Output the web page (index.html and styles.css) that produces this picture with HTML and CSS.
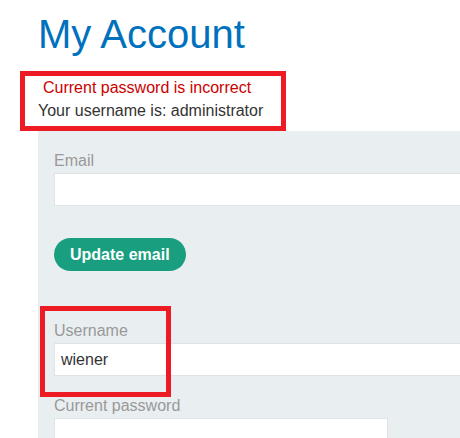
FILE: index.html
```html
<!DOCTYPE html>
<html>
<head>
<meta charset="utf-8">
<link rel="stylesheet" href="styles.css">
</head>
<body>
<div class="page">
  <h1 class="title">My Account</h1>
  <div class="notice">
    <p class="error">Current password is incorrect</p>
    <p class="user">Your username is: administrator</p>
  </div>
  <div class="panel">
    <form class="form">
      <label class="label">Email</label>
      <input class="input wide" type="email">
      <button class="btn" type="button">Update email</button>
    </form>
    <form class="form second">
      <label class="label">Username</label>
      <input class="input wide" type="text" value="wiener">
      <label class="label gap">Current password</label>
      <input class="input narrow" type="password">
    </form>
    <div class="highlight"></div>
  </div>
</div>
</body>
</html>
```

FILE: styles.css
```css
html, body {
  margin: 0;
  padding: 0;
  overflow: hidden;
  background: #ffffff;
}
body {
  font-family: "Liberation Sans", Arial, sans-serif;
  width: 460px;
  height: 438px;
}
.page {
  box-sizing: border-box;
  width: 460px;
  height: 438px;
  overflow: hidden;
  padding-left: 38px;
}
.title {
  margin: 12px 0 0 0;
  font-size: 40px;
  line-height: 45px;
  font-weight: normal;
  color: #0071bc;
}
.notice {
  box-sizing: border-box;
  margin: 14px 0 0 -18px;
  width: 266px;
  height: 60px;
  border: 5px solid #ed1c24;
  padding: 0 0 0 13px;
}
.notice p {
  margin: 0;
  font-size: 16px;
  line-height: 23px;
}
.error {
  color: #cc0000;
  padding-left: 5px;
}
.user {
  color: #333333;
}
.panel {
  position: relative;
  background: #e9eef1;
  width: 422px;
  height: 320px;
  padding: 20px 0 0 16px;
  box-sizing: border-box;
  overflow: hidden;
}
.form {
  display: flex;
  flex-direction: column;
  align-items: flex-start;
}
.label {
  display: block;
  font-size: 16px;
  line-height: 20px;
  color: #999999;
  margin-bottom: 2px;
}
.input {
  box-sizing: border-box;
  height: 33px;
  border: 1px solid #dfe3e6;
  background: #ffffff;
  padding: 0 6px;
  font-family: "Liberation Sans", Arial, sans-serif;
  font-size: 16px;
  color: #333333;
  outline: none;
}
.wide {
  width: 420px;
}
.narrow {
  width: 334px;
}
.btn {
  margin-top: 32px;
  height: 33px;
  border: none;
  border-radius: 17px;
  background: #199e80;
  color: #ffffff;
  font-family: "Liberation Sans", Arial, sans-serif;
  font-weight: bold;
  font-size: 16px;
  padding: 0 16px;
}
.second {
  margin-top: 50px;
}
.gap {
  margin-top: 20px;
}
.highlight {
  position: absolute;
  left: 2px;
  top: 175px;
  width: 131px;
  height: 91px;
  box-sizing: border-box;
  border: 5px solid #ed1c24;
}
```
